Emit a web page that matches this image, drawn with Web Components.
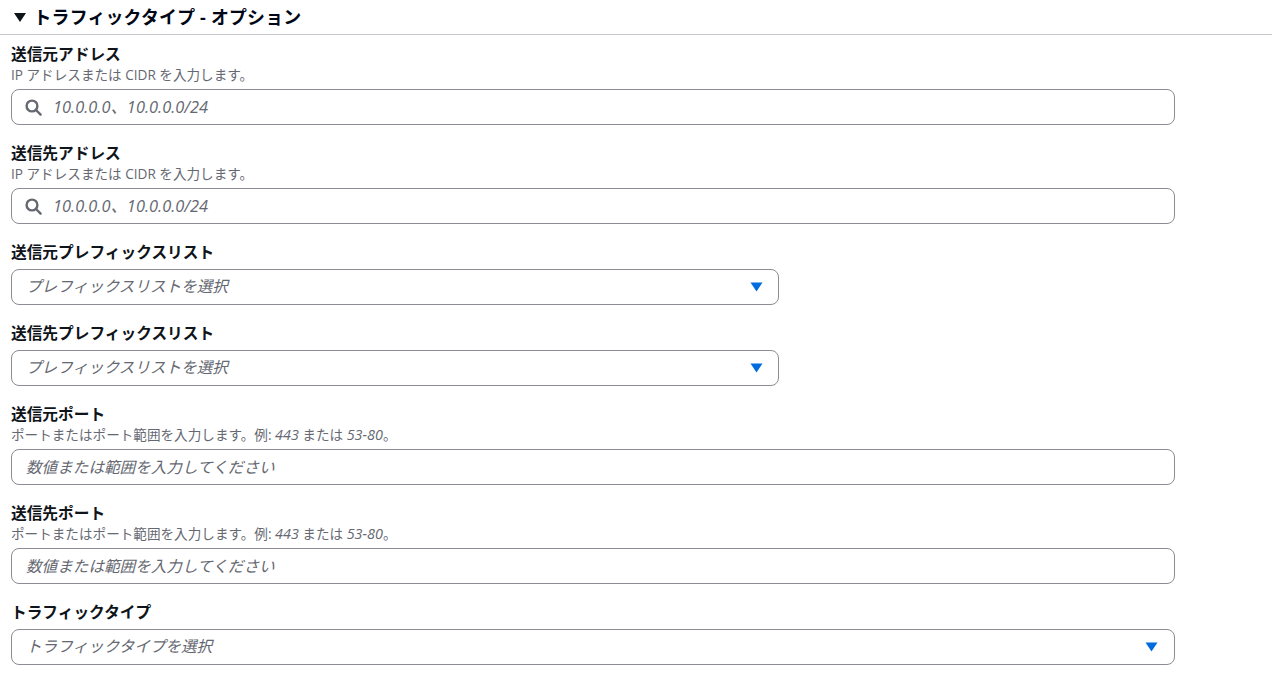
<!DOCTYPE html>
<html lang="ja">
<head>
<meta charset="utf-8">
<title>トラフィックタイプ</title>
<style>
  html, body { margin: 0; background: #fff; overflow: hidden; }
  body { font-family: "Open Sans", "Noto Sans CJK JP", sans-serif; color: #000716; }
</style>
</head>
<body>
<filter-section heading="トラフィックタイプ - オプション">
  <form-field label="送信元アドレス" hint="IP アドレスまたは CIDR を入力します。">
    <text-box search placeholder="10.0.0.0、10.0.0.0/24"></text-box>
  </form-field>
  <form-field label="送信先アドレス" hint="IP アドレスまたは CIDR を入力します。">
    <text-box search placeholder="10.0.0.0、10.0.0.0/24"></text-box>
  </form-field>
  <form-field label="送信元プレフィックスリスト">
    <select-box narrow placeholder="プレフィックスリストを選択"></select-box>
  </form-field>
  <form-field label="送信先プレフィックスリスト">
    <select-box narrow placeholder="プレフィックスリストを選択"></select-box>
  </form-field>
  <form-field label="送信元ポート">
    <span slot="hint">ポートまたはポート範囲を入力します。例: <i style="font-size:14.4px">443</i> または <i style="font-size:14.4px">53-80</i>。</span>
    <text-box placeholder="数値または範囲を入力してください"></text-box>
  </form-field>
  <form-field label="送信先ポート">
    <span slot="hint">ポートまたはポート範囲を入力します。例: <i style="font-size:14.4px">443</i> または <i style="font-size:14.4px">53-80</i>。</span>
    <text-box placeholder="数値または範囲を入力してください"></text-box>
  </form-field>
  <form-field label="トラフィックタイプ">
    <select-box placeholder="トラフィックタイプを選択"></select-box>
  </form-field>
</filter-section>

<script>
class FilterSection extends HTMLElement {
  constructor() {
    super();
    const shadow = this.attachShadow({ mode: 'open' });
    shadow.innerHTML = `
    <style>
      :host { display: block; }
      header {
        display: flex;
        align-items: center;
        gap: 8px;
        height: 34px;
        padding-left: 13.5px;
        border-bottom: 1px solid #c6c6cd;
        font-size: 17.9px;
        font-weight: 700;
        letter-spacing: 0.2px;
      }
      svg { width: 12px; height: 9px; flex: none; }
      header span { margin-top: -2px; }
      .body {
        display: flex;
        flex-direction: column;
        gap: 18px;
        padding: 9px 0 0 11px;
      }
    </style>
    <header>
      <svg viewBox="0 0 12 9"><path d="M0 0 H12 L6 9 Z" fill="#0f141a"/></svg>
      <span>${this.getAttribute('heading')}</span>
    </header>
    <div class="body"><slot></slot></div>
    `;
  }
}

class FormField extends HTMLElement {
  constructor() {
    super();
    const shadow = this.attachShadow({ mode: 'open' });
    const hint = this.getAttribute('hint');
    shadow.innerHTML = `
    <style>
      :host { display: block; }
      .label { font-size: 15.7px; font-weight: 700; line-height: 20px; color: #0f141a; }
      .hint { font-size: 13.6px; line-height: 16px; margin-top: 3px; color: #656871; white-space: nowrap; }
      .control { margin-top: 7px; }
      .with-hint .control { margin-top: 6px; }
    </style>
    <div class="wrap">
      <div class="label">${this.getAttribute('label')}</div>
      <div class="hint" hidden><slot name="hint">${hint || ''}</slot></div>
      <div class="control"><slot></slot></div>
    </div>
    `;
    if (hint || this.querySelector('[slot=hint]')) {
      shadow.querySelector('.hint').hidden = false;
      shadow.querySelector('.wrap').classList.add('with-hint');
    }
  }
}

class TextBox extends HTMLElement {
  constructor() {
    super();
    const shadow = this.attachShadow({ mode: 'open' });
    const search = this.hasAttribute('search');
    shadow.innerHTML = `
    <style>
      :host { display: block; width: 1164px; }
      .box {
        display: flex;
        align-items: center;
        gap: 11px;
        height: 36px;
        box-sizing: border-box;
        padding: 0 14px;
        border: 1px solid #8c8c94;
        border-radius: 8px;
        background: #fff;
      }
      :host([search]) .box { padding-left: 13px; }
      svg { width: 17px; height: 17px; flex: none; }
      span {
        font-size: 15.6px;
        line-height: 20px;
        font-style: italic;
        color: #656871;
        white-space: nowrap;
      }
      :host([search]) span { font-size: 16.4px; }
    </style>
    <div class="box">
      ${search ? `<svg viewBox="0 0 17 17" fill="none" stroke="#656871" stroke-width="2.4"><circle cx="7" cy="7" r="5.4"/><path d="M11 11 L15.6 15.6" stroke-linecap="round"/></svg>` : ''}
      <span>${this.getAttribute('placeholder')}</span>
    </div>
    `;
  }
}

class SelectBox extends HTMLElement {
  constructor() {
    super();
    const shadow = this.attachShadow({ mode: 'open' });
    shadow.innerHTML = `
    <style>
      :host { display: block; width: 1164px; }
      :host([narrow]) { width: 768px; }
      .box {
        display: flex;
        align-items: center;
        justify-content: space-between;
        height: 36px;
        box-sizing: border-box;
        padding: 0 16.5px 0 14px;
        border: 1px solid #8c8c94;
        border-radius: 8px;
        background: #fff;
      }
      :host([narrow]) .box { padding-right: 15.5px; }
      span {
        font-size: 15.6px;
        line-height: 20px;
        margin-top: -2px;
        font-style: italic;
        color: #656871;
        white-space: nowrap;
      }
      svg { width: 13px; height: 10px; flex: none; }
    </style>
    <div class="box">
      <span>${this.getAttribute('placeholder')}</span>
      <svg viewBox="0 0 13 10"><path d="M0.5 0.5 H12.5 L6.5 9.5 Z" fill="#006ce0"/></svg>
    </div>
    `;
  }
}

customElements.define('filter-section', FilterSection);
customElements.define('form-field', FormField);
customElements.define('text-box', TextBox);
customElements.define('select-box', SelectBox);
</script>
</body>
</html>
